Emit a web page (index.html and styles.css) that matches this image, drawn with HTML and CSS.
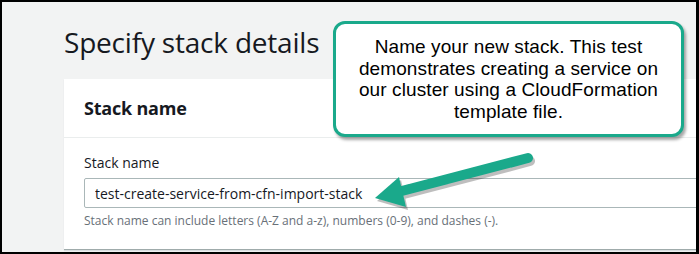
FILE: index.html
```html
<!DOCTYPE html>
<html>
<head>
  <title>Specify stack details</title>
  <meta charset="UTF-8">
  <link rel="stylesheet" href="styles.css">
</head>
<body>
  <div class="frame">
    <div class="page">
      <h1>Specify stack details</h1>

      <div class="card">
        <div class="card-header">Stack name</div>
        <div class="card-body">
          <label for="stack-name">Stack name</label>
          <input type="text" id="stack-name" value="test-create-service-from-cfn-import-stack">
          <div class="hint">Stack name can include letters (A-Z and a-z), numbers (0-9), and dashes (-).</div>
        </div>
      </div>

      <!-- annotation laid over the screenshot -->
      <div class="callout">Name your new stack. This test demonstrates creating a service on our cluster using a CloudFormation template file.</div>
      <svg class="arrow" viewBox="0 0 699 254" xmlns="http://www.w3.org/2000/svg">
        <g class="arrow-shadow" transform="translate(2 3)">
          <line x1="528" y1="158" x2="398" y2="192"></line>
          <polygon points="375,198 399,177 406,207"></polygon>
        </g>
        <g class="arrow-body">
          <line x1="528" y1="158" x2="398" y2="192"></line>
          <polygon points="375,198 399,177 406,207"></polygon>
        </g>
      </svg>
    </div>
  </div>
</body>
</html>
```

FILE: styles.css
```css
html, body {
  margin: 0;
  height: 100%;
}
body {
  background-color: #000;
}
.frame {
  box-sizing: border-box;
  height: 100%;
  padding: 2px 3px 2px 2px;
}
.page {
  position: relative;
  box-sizing: border-box;
  height: 100%;
  overflow: hidden;
  background-color: #f2f3f3;
  padding: 22px 0 0 62px;
  font-family: "Open Sans", Arial, sans-serif;
  color: #16191f;
}
h1 {
  margin: 0;
  font-size: 28px;
  line-height: 36px;
  font-weight: 400;
  letter-spacing: -0.2px;
}
.card {
  margin-top: 19px;
  width: 700px;
  background-color: #fff;
  border-bottom: 1px solid #9fabab;
  box-shadow: 0 1px 1px rgba(0,31,63,0.1);
}
.card-header {
  padding: 0 20px;
  line-height: 58px;
  font-size: 18px;
  font-weight: 700;
  letter-spacing: -0.2px;
  border-bottom: 1px solid #eaeded;
}
.card-body {
  padding: 15px 20px 20px 20px;
}
label {
  display: block;
  font-size: 14px;
  line-height: 20px;
}
input[type="text"] {
  display: block;
  box-sizing: border-box;
  width: 100%;
  height: 30px;
  margin-top: 5px;
  padding: 0 10px;
  border: 1px solid #aab7b8;
  border-radius: 2px;
  font-family: "Open Sans", Arial, sans-serif;
  font-size: 14px;
  color: #16191f;
  outline: none;
}
.hint {
  margin-top: 5px;
  font-size: 12px;
  line-height: 16px;
  color: #687078;
}
.callout {
  position: absolute;
  left: 331px;
  top: 19px;
  width: 351px;
  height: 116px;
  box-sizing: border-box;
  padding: 12px 10px 0 10px;
  background-color: #fff;
  border: 3px solid #1aa98b;
  border-radius: 12px;
  box-shadow: 2px 3px 3px rgba(0,0,0,0.35);
  font-family: "Liberation Sans", Arial, sans-serif;
  font-size: 19px;
  line-height: 21.5px;
  letter-spacing: 0.1px;
  text-align: center;
  color: #000;
}
.arrow {
  position: absolute;
  left: -2px;
  top: -2px;
  width: 699px;
  height: 254px;
}
.arrow line {
  stroke-width: 10;
  stroke-linecap: round;
}
.arrow-body line {
  stroke: #1aa98b;
}
.arrow-body polygon {
  fill: #1aa98b;
}
.arrow-shadow {
  opacity: 0.25;
}
.arrow-shadow line {
  stroke: #000;
}
.arrow-shadow polygon {
  fill: #000;
}
```
